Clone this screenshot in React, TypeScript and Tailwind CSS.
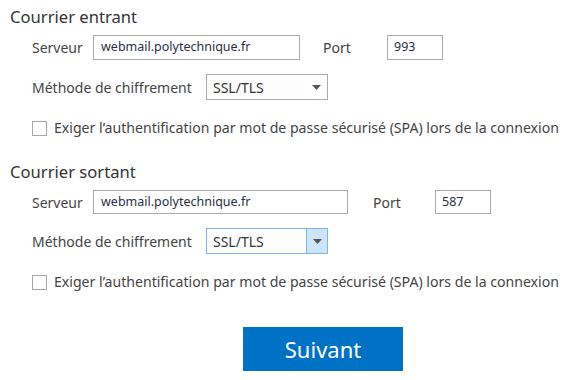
import React from "react";

const font = { fontFamily: '"Noto Sans", "Open Sans", sans-serif' };

function Arrow() {
  return (
    <svg width="9" height="5" viewBox="0 0 9 5">
      <path d="M0 0 L9 0 L4.5 5 Z" fill="#555" />
    </svg>
  );
}

function Section({
  title,
  serverW,
  portGap,
  port,
  focused,
  inputH,
}: {
  title: string;
  serverW: string;
  portGap: string;
  port: string;
  focused: boolean;
  inputH: string;
}) {
  return (
    <div className="flex flex-col">
      <div className="text-[16.6px] leading-[22px] text-[#333] pl-[10px]">{title}</div>
      <div className={`flex items-center pl-[32px] mt-[7px] ${inputH}`}>
        <span className="text-[14px] text-[#444] w-[61px]">Serveur</span>
        <div
          className={`${serverW} h-full border border-[#ababab] flex items-center pl-[7px] text-[12.5px] text-[#2a2f45]`}
        >
          webmail.polytechnique.fr
        </div>
        <span className={`text-[14px] text-[#444] ${portGap}`}>Port</span>
        <div className="w-[56px] h-full border border-[#ababab] flex items-center pl-[6px] text-[12.5px] text-[#2a2f45]">
          {port}
        </div>
      </div>
      <div className="flex items-center pl-[32px] mt-[14px] h-[26px]">
        <span className="text-[14px] text-[#444] w-[174px]">Méthode de chiffrement</span>
        <div
          className={`w-[122px] h-full border flex items-stretch ${
            focused ? "border-[#7eb4ea]" : "border-[#ababab]"
          }`}
        >
          <div className="flex-1 flex items-center pl-[6px] text-[14px] text-[#333] bg-[#fdfdfd]">SSL/TLS</div>
          <div
            className={`w-[21px] flex items-center justify-center ${
              focused ? "bg-[#cce4f7] border-l border-[#7eb4ea]" : ""
            }`}
          >
            <Arrow />
          </div>
        </div>
      </div>
      <div className="flex items-center pl-[32px] mt-[20px] h-[16px]">
        <div className="w-[15px] h-[15px] border border-[#a6a6a6] bg-white" />
        <span className="ml-[7px] text-[14.1px] text-[#444] whitespace-nowrap">
          Exiger l’authentification par mot de passe sécurisé (SPA) lors de la connexion
        </span>
      </div>
    </div>
  );
}

export default function App() {
  return (
    <div className="w-[575px] h-[380px] bg-white overflow-hidden pt-[6px]" style={font}>
      <Section
        title="Courrier entrant"
        serverW="w-[207px]"
        portGap="ml-[23px] w-[64px]"
        port="993"
        focused={false}
        inputH="h-[25px]"
      />
      <div className="mt-[25px]">
        <Section
          title="Courrier sortant"
          serverW="w-[255px]"
          portGap="ml-[25px] w-[62px]"
          port="587"
          focused={true}
          inputH="h-[24px]"
        />
      </div>
      <div className="flex justify-center mt-[37px] pl-[71px]">
        <button className="w-[160px] h-[44px] bg-[#0072c6] text-white text-[22px] leading-none">
          Suivant
        </button>
      </div>
    </div>
  );
}
